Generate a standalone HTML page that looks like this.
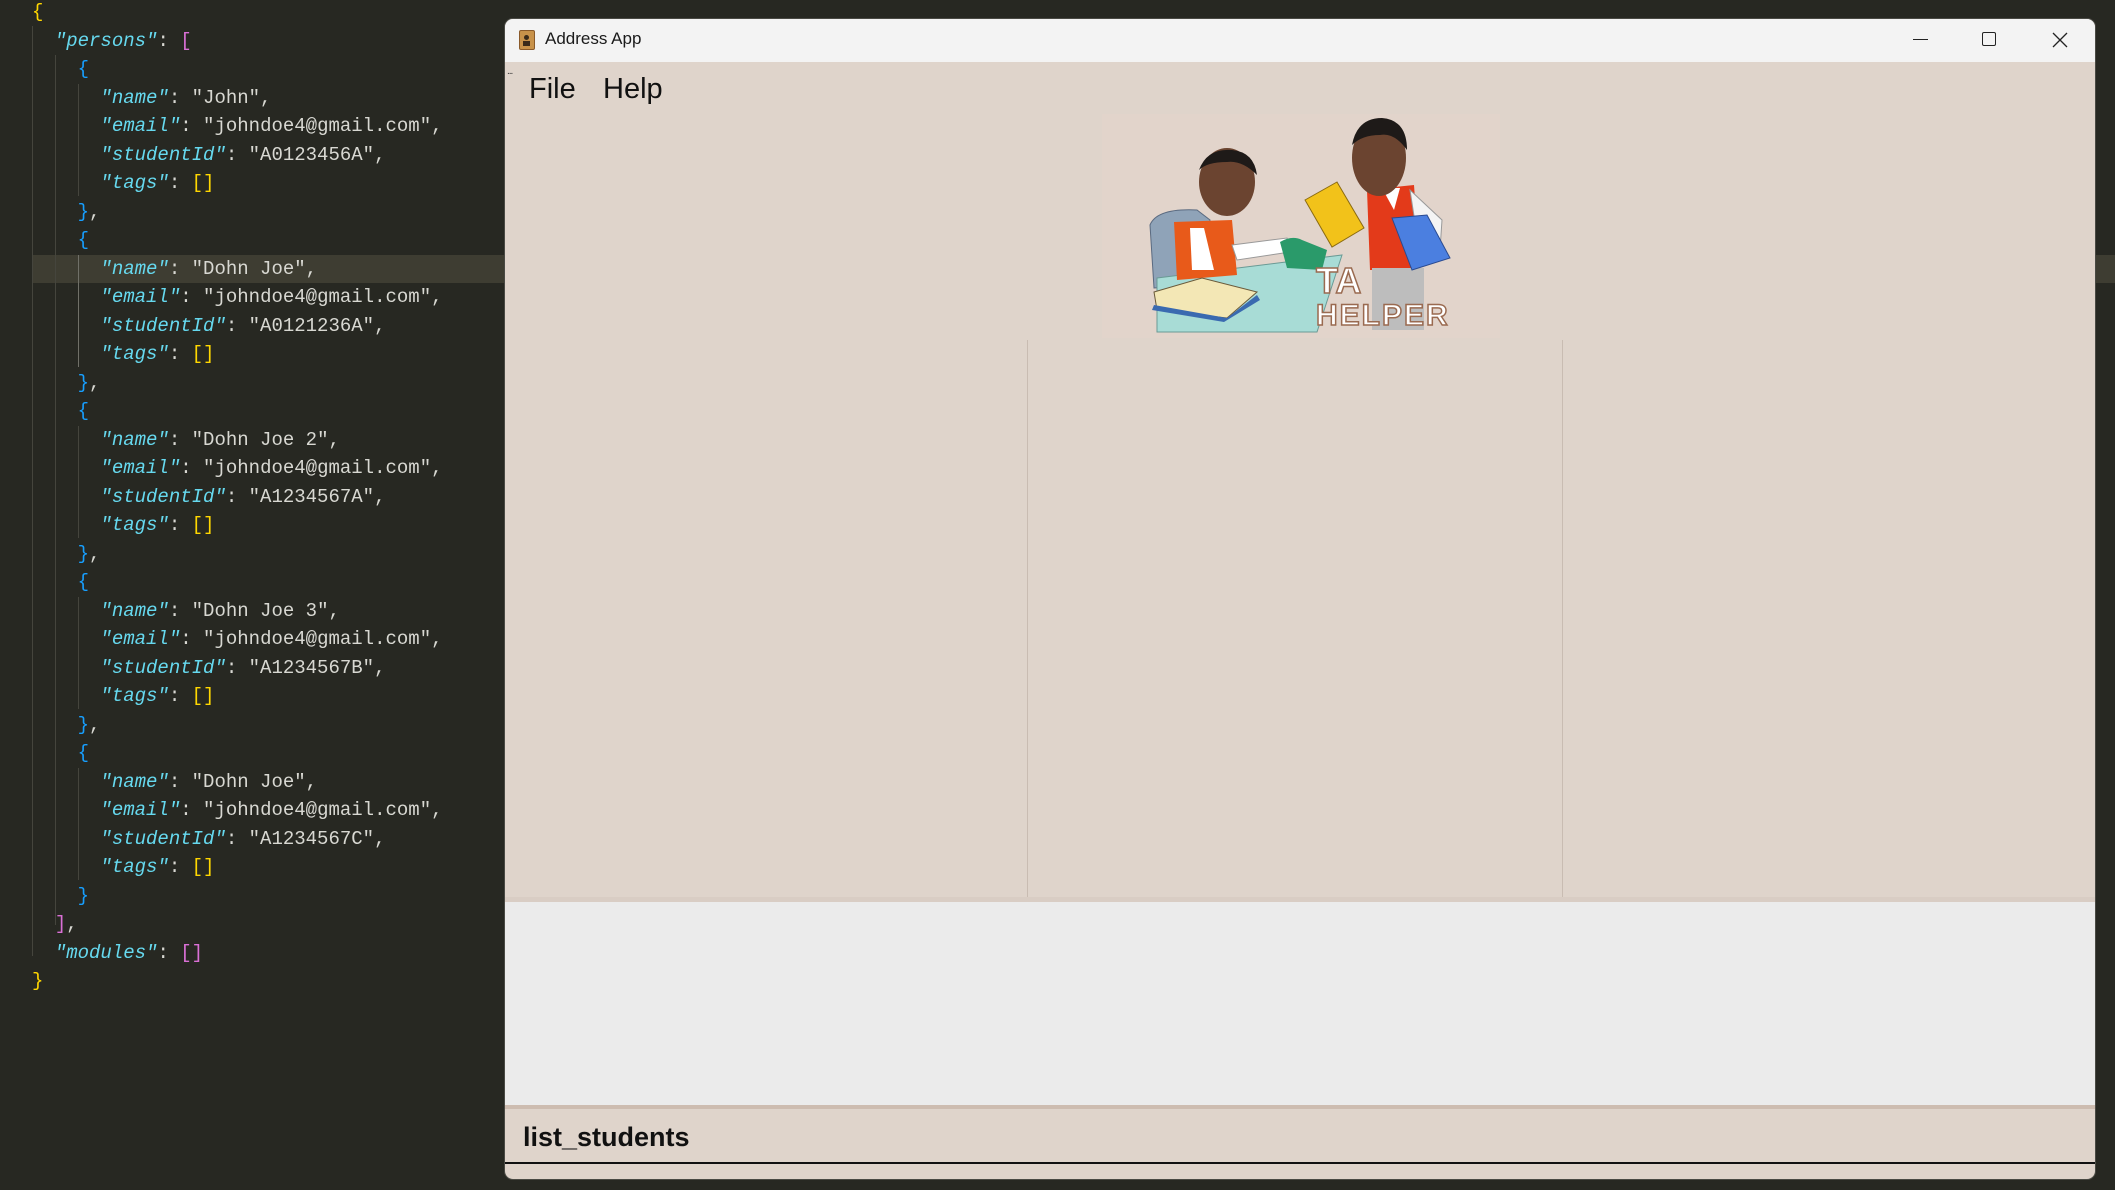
<!DOCTYPE html>
<html><head><meta charset="utf-8"><style>
body{margin:0;width:2115px;height:1190px;background:#272822;overflow:hidden;position:relative;font-family:"Liberation Sans",sans-serif}
.code{position:absolute;left:32px;top:-2px;margin:0;font:19px/28.5px "Liberation Mono",monospace;color:#d8d8d2;white-space:pre}
.k{color:#66d9ef;font-style:italic}.y{color:#ffd700}.m{color:#da70d6}.b{color:#179fff}
.g{position:absolute;width:1px;background:#45453d}
.win{position:absolute;left:505px;top:19px;width:1590px;height:1160px;background:#dfd4cb;border-radius:8px;overflow:hidden;box-shadow:0 0 0 1px #4a4a44}
.tb{position:absolute;left:0;top:0;right:0;height:43px;background:#f3f3f3}
</style></head><body>
<div style="position:absolute;left:32px;top:255px;width:480px;height:28px;background:#3e3d32"></div>
<div style="position:absolute;left:2095px;top:255px;width:20px;height:28px;background:#3e3d32"></div>
<div class="g" style="left:32px;top:26px;height:930px"></div>
<div class="g" style="left:55px;top:55px;height:870px"></div>
<div class="g" style="left:78px;top:84px;height:112px"></div>
<div class="g" style="left:78px;top:255px;height:112px;background:#707068"></div>
<div class="g" style="left:78px;top:426px;height:112px"></div>
<div class="g" style="left:78px;top:597px;height:112px"></div>
<div class="g" style="left:78px;top:768px;height:112px"></div>
<pre class="code"><span class="y">{</span>
  <span class="k">"persons"</span>: <span class="m">[</span>
    <span class="b">{</span>
      <span class="k">"name"</span>: "John",
      <span class="k">"email"</span>: "johndoe4@gmail.com",
      <span class="k">"studentId"</span>: "A0123456A",
      <span class="k">"tags"</span>: <span class="y">[]</span>
    <span class="b">}</span>,
    <span class="b">{</span>
      <span class="k">"name"</span>: "Dohn Joe",
      <span class="k">"email"</span>: "johndoe4@gmail.com",
      <span class="k">"studentId"</span>: "A0121236A",
      <span class="k">"tags"</span>: <span class="y">[]</span>
    <span class="b">}</span>,
    <span class="b">{</span>
      <span class="k">"name"</span>: "Dohn Joe 2",
      <span class="k">"email"</span>: "johndoe4@gmail.com",
      <span class="k">"studentId"</span>: "A1234567A",
      <span class="k">"tags"</span>: <span class="y">[]</span>
    <span class="b">}</span>,
    <span class="b">{</span>
      <span class="k">"name"</span>: "Dohn Joe 3",
      <span class="k">"email"</span>: "johndoe4@gmail.com",
      <span class="k">"studentId"</span>: "A1234567B",
      <span class="k">"tags"</span>: <span class="y">[]</span>
    <span class="b">}</span>,
    <span class="b">{</span>
      <span class="k">"name"</span>: "Dohn Joe",
      <span class="k">"email"</span>: "johndoe4@gmail.com",
      <span class="k">"studentId"</span>: "A1234567C",
      <span class="k">"tags"</span>: <span class="y">[]</span>
    <span class="b">}</span>
  <span class="m">]</span>,
  <span class="k">"modules"</span>: <span class="m">[]</span>
<span class="y">}</span></pre>

<div class="win">
  <div class="tb">
    <div style="position:absolute;left:14px;top:11px;width:14px;height:18px;background:#c8924a;border:1px solid #8a5a2a;border-radius:2px"></div>
    <div style="position:absolute;left:19px;top:16px;width:5px;height:5px;background:#3a2a1a;border-radius:50%"></div>
    <div style="position:absolute;left:18px;top:22px;width:7px;height:5px;background:#3a2a1a"></div>
    <div style="position:absolute;left:40px;top:10px;font-size:17px;color:#1a1a1a">Address App</div>
    <div style="position:absolute;left:1408px;top:20px;width:15px;height:1px;background:#222"></div>
    <div style="position:absolute;left:1477px;top:13px;width:12px;height:12px;border:1px solid #222;border-radius:2px"></div>
    <svg style="position:absolute;left:1547px;top:13px" width="16" height="16"><path d="M1 1L15 15M15 1L1 15" stroke="#222" stroke-width="1.3"/></svg>
  </div>
  <div style="position:absolute;left:2px;top:47px;font-size:10px;color:#333;letter-spacing:-1px">...</div>
  <div style="position:absolute;left:24px;top:54px;font-size:29px;color:#111">File</div>
  <div style="position:absolute;left:98px;top:54px;font-size:29px;color:#111">Help</div>

  <svg style="position:absolute;left:597px;top:91px" width="400" height="230" viewBox="0 0 400 230">
    <rect x="0" y="4" width="398" height="224" fill="#e2d4cb"/>
    <path d="M48 115 Q55 98 95 100 L108 110 L100 175 L52 178 Z" fill="#8fa3b8" stroke="#5a6a80"/>
    <path d="M55 168 L240 145 L215 222 L55 222 Z" fill="#a8dcd6" stroke="#6a9a95"/>
    <path d="M72 112 L130 110 L135 165 L75 170 Z" fill="#e85a1a"/>
    <path d="M88 118 L102 118 L112 160 L90 160 Z" fill="#fff"/>
    <path d="M130 135 L185 128 L188 142 L135 150 Z" fill="#fff" stroke="#999"/>
    <path d="M52 182 L100 168 L155 182 L125 208 L55 200 Z" fill="#f3e7b5" stroke="#6a5a3a"/>
    <path d="M52 195 L125 208 L155 185 L158 190 L122 212 L50 200Z" fill="#3a6ab0"/>
    <ellipse cx="125" cy="72" rx="28" ry="34" fill="#6b4430"/>
    <path d="M97 60 Q105 38 130 40 Q152 42 155 65 Q140 50 125 52 Q105 52 97 60Z" fill="#1e1a18"/>
    <path d="M178 132 Q190 125 200 130 L225 140 L220 160 L185 158Z" fill="#2a9a6a"/>
    <path d="M265 80 L312 75 L318 160 L268 160 Z" fill="#e33a1a"/>
    <path d="M280 78 L298 78 L292 100 Z" fill="#fff"/>
    <path d="M308 80 L340 110 L338 140 L318 145 Z" fill="#f4f4f4" stroke="#999"/>
    <rect x="270" y="158" width="52" height="62" fill="#bdbdbd"/>
    <path d="M203 90 L235 72 L262 118 L230 137 Z" fill="#f2c21a" stroke="#8a6a10"/>
    <path d="M290 108 L325 105 L348 148 L310 160 Z" fill="#4b7fe0" stroke="#2a4a90"/>
    <ellipse cx="277" cy="48" rx="27" ry="38" fill="#6b4430"/>
    <path d="M250 35 Q255 8 280 8 Q305 10 305 40 Q292 22 278 25 Q260 25 250 35Z" fill="#1e1a18"/>
    <text x="214" y="183" font-family="Liberation Sans" font-weight="bold" font-size="36" fill="#fff" stroke="#9a6a50" stroke-width="1.5">TA</text>
    <text x="214" y="215" font-family="Liberation Sans" font-weight="bold" font-size="30" fill="#fff" stroke="#9a6a50" stroke-width="1.5" letter-spacing="2">HELPER</text>
  </svg>

  <div style="position:absolute;left:522px;top:321px;width:1px;height:557px;background:#c9bcb2"></div>
  <div style="position:absolute;left:1057px;top:321px;width:1px;height:557px;background:#c9bcb2"></div>
  <div style="position:absolute;left:0;top:878px;width:1590px;height:5px;background:#d9cdc4"></div>
  <div style="position:absolute;left:0;top:883px;width:1590px;height:203px;background:#ebebeb"></div>
  <div style="position:absolute;left:0;top:1086px;width:1590px;height:4px;background:#cdbcb0"></div>
  <div style="position:absolute;left:18px;top:1103px;font-size:27px;font-weight:bold;color:#111">list_students</div>
  <div style="position:absolute;left:0;top:1143px;width:1590px;height:2px;background:#111"></div>
</div>
</body></html>
